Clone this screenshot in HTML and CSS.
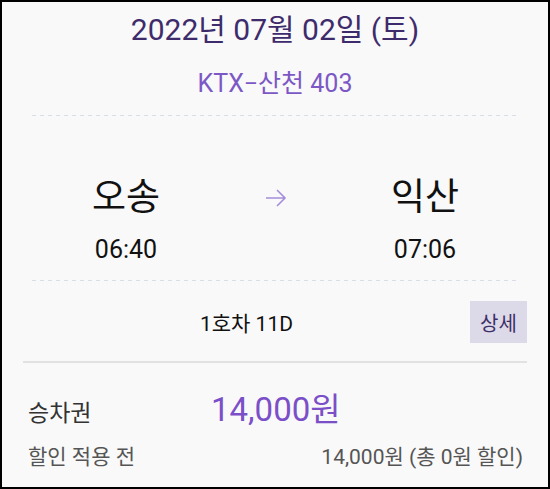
FILE: index.html
```html
<!DOCTYPE html>
<html lang="ko">
<head>
<meta charset="utf-8">
<link rel="stylesheet" href="styles.css">
</head>
<body>
<div class="card">
  <div class="date">2022년 07월 02일 (토)</div>
  <div class="train">KTX−산천 403</div>
  <div class="dots"></div>
  <div class="route">
    <div class="stop">
      <div class="station">오송</div>
      <div class="time">06:40</div>
    </div>
    <div class="arrow">
      <svg width="22" height="20" viewBox="0 0 22 20"><path d="M1 10 H20 M12 2 L20 10 L12 18" fill="none" stroke="#a58ddc" stroke-width="1.6"/></svg>
    </div>
    <div class="stop">
      <div class="station">익산</div>
      <div class="time">07:06</div>
    </div>
  </div>
  <div class="dots"></div>
  <div class="seat-row">
    <div class="seat">1호차 11D</div>
    <button class="detail">상세</button>
  </div>
  <div class="rule"></div>
  <div class="fare-row">
    <div class="fare-label">승차권</div>
    <div class="fare-price">14,000원</div>
  </div>
  <div class="disc-row">
    <div class="disc-label">할인 적용 전</div>
    <div class="disc-value">14,000원 (총 0원 할인)</div>
  </div>
</div>
</body>
</html>
```

FILE: styles.css
```css
* { box-sizing: border-box; }
html, body { margin: 0; padding: 0; }
body {
  font-family: Roboto, "Noto Sans CJK KR", sans-serif;
  background: #f9f9f9;
}
.card {
  width: 550px;
  height: 489px;
  border: 2px solid #000;
  background: #f9f9f9;
  overflow: hidden;
}
.date {
  margin-top: 8px;
  height: 40px;
  line-height: 40px;
  text-align: center;
  font-size: 30px;
  color: #3e2b6c;
}
.train {
  margin-top: 14px;
  height: 40px;
  line-height: 40px;
  text-align: center;
  font-size: 25px;
  color: #7c58c6;
}
.dots {
  height: 1px;
  margin: 11px 32px 0 30px;
  background: repeating-linear-gradient(to right, #d9dde6 0 4px, transparent 4px 8px);
}
.route {
  display: grid;
  grid-template-columns: 160px 140px 158px;
  margin-left: 44px;
  padding-top: 58px;
}
.stop {
  display: flex;
  flex-direction: column;
  align-items: center;
}
.station {
  height: 48px;
  line-height: 48px;
  font-size: 37px;
  color: #111;
}
.time {
  margin-top: 13px;
  height: 30px;
  line-height: 30px;
  font-size: 25px;
  color: #111;
}
.arrow {
  display: flex;
  justify-content: center;
  padding-top: 14px;
}
.route + .dots { margin-top: 15px; }
.seat-row {
  display: flex;
  align-items: center;
  padding: 20px 21px 0 21px;
}
.seat {
  flex: 1;
  text-align: center;
  font-size: 21px;
  color: #111;
}
.detail {
  width: 57px;
  height: 42px;
  border: none;
  padding: 0;
  background: #dcd9e8;
  color: #3d2e68;
  font-family: Roboto, "Noto Sans CJK KR", sans-serif;
  font-size: 20px;
}
.rule {
  height: 2px;
  margin: 18px 21px 0 21px;
  background: #e2e2e2;
}
.fare-row {
  display: flex;
  align-items: baseline;
  padding: 20px 0 0 26px;
  height: 60px;
}
.fare-label {
  width: 183px;
  font-size: 23px;
  color: #333;
}
.fare-price {
  font-size: 33px;
  color: #7b4fc8;
}
.disc-row {
  display: flex;
  justify-content: space-between;
  align-items: baseline;
  padding: 17px 25px 0 26px;
  font-size: 21px;
  color: #555;
}
```
